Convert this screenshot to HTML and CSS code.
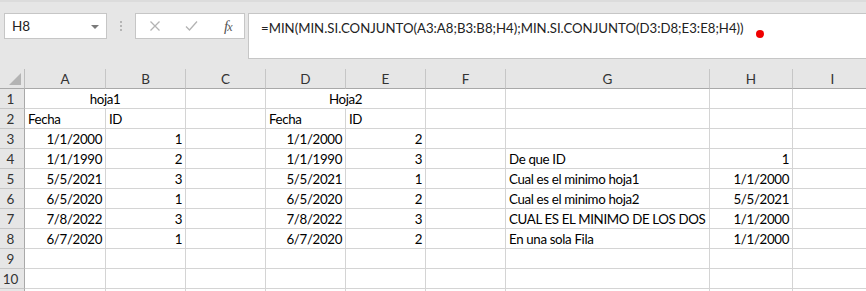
FILE: index.html
```html
<!DOCTYPE html>
<html lang="es">
<head>
<meta charset="utf-8">
<title>Excel</title>
<link rel="stylesheet" href="styles.css">
</head>
<body>
<div class="app">
  <div class="toolbar">
    <div class="namebox">
      <span class="name">H8</span>
      <span class="caret"></span>
    </div>
    <div class="grip"><i></i><i></i><i></i></div>
    <div class="fxbox">
      <svg class="ico" width="12" height="12" viewBox="0 0 12 12"><path d="M1.5 1.5 L10.5 10.5 M10.5 1.5 L1.5 10.5" stroke="#b3b3b3" stroke-width="1.3" fill="none"/></svg>
      <svg class="ico" width="13" height="12" viewBox="0 0 13 12"><path d="M1 6.5 L4.5 10 L12 1.5" stroke="#b3b3b3" stroke-width="1.3" fill="none"/></svg>
      <span class="fx">f<span class="x">x</span></span>
    </div>
    <div class="formula">
      <span class="ftext">=MIN(MIN.SI.CONJUNTO(A3:A8;B3:B8;H4);MIN.SI.CONJUNTO(D3:D8;E3:E8;H4))</span>
      <span class="dot"></span>
    </div>
  </div>
  <div class="sheet">
    <div class="corner"><span class="tri"></span></div>
    <div class="ch">A</div><div class="ch">B</div><div class="ch">C</div><div class="ch">D</div><div class="ch">E</div><div class="ch">F</div><div class="ch">G</div><div class="ch">H</div><div class="ch">I</div>

    <div class="rh">1</div>
    <div class="c span2 ctr">hoja1</div><div class="c"></div><div class="c span2 ctr">Hoja2</div><div class="c"></div><div class="c"></div><div class="c"></div><div class="c"></div>

    <div class="rh">2</div>
    <div class="c">Fecha</div><div class="c">ID</div><div class="c"></div><div class="c">Fecha</div><div class="c">ID</div><div class="c"></div><div class="c"></div><div class="c"></div><div class="c"></div>

    <div class="rh">3</div>
    <div class="c r">1/1/2000</div><div class="c r">1</div><div class="c"></div><div class="c r">1/1/2000</div><div class="c r">2</div><div class="c"></div><div class="c"></div><div class="c"></div><div class="c"></div>

    <div class="rh">4</div>
    <div class="c r">1/1/1990</div><div class="c r">2</div><div class="c"></div><div class="c r">1/1/1990</div><div class="c r">3</div><div class="c"></div><div class="c">De que ID</div><div class="c r">1</div><div class="c"></div>

    <div class="rh">5</div>
    <div class="c r">5/5/2021</div><div class="c r">3</div><div class="c"></div><div class="c r">5/5/2021</div><div class="c r">1</div><div class="c"></div><div class="c">Cual es el minimo hoja1</div><div class="c r">1/1/2000</div><div class="c"></div>

    <div class="rh">6</div>
    <div class="c r">6/5/2020</div><div class="c r">1</div><div class="c"></div><div class="c r">6/5/2020</div><div class="c r">2</div><div class="c"></div><div class="c">Cual es el minimo hoja2</div><div class="c r">5/5/2021</div><div class="c"></div>

    <div class="rh">7</div>
    <div class="c r">7/8/2022</div><div class="c r">3</div><div class="c"></div><div class="c r">7/8/2022</div><div class="c r">3</div><div class="c"></div><div class="c">CUAL ES EL MINIMO DE LOS DOS</div><div class="c r">1/1/2000</div><div class="c"></div>

    <div class="rh">8</div>
    <div class="c r">6/7/2020</div><div class="c r">1</div><div class="c"></div><div class="c r">6/7/2020</div><div class="c r">2</div><div class="c"></div><div class="c">En una sola Fila</div><div class="c r">1/1/2000</div><div class="c"></div>

    <div class="rh">9</div>
    <div class="c"></div><div class="c"></div><div class="c"></div><div class="c"></div><div class="c"></div><div class="c"></div><div class="c"></div><div class="c"></div><div class="c"></div>

    <div class="rh">10</div>
    <div class="c"></div><div class="c"></div><div class="c"></div><div class="c"></div><div class="c"></div><div class="c"></div><div class="c"></div><div class="c"></div><div class="c"></div>

    <div class="rh"></div>
    <div class="c"></div><div class="c"></div><div class="c"></div><div class="c"></div><div class="c"></div><div class="c"></div><div class="c"></div><div class="c"></div><div class="c"></div>
  </div>
</div>
</body>
</html>
```
FILE: styles.css
```css
* { box-sizing: border-box; }
html, body { margin: 0; padding: 0; }
body {
  width: 866px;
  height: 291px;
  overflow: hidden;
  background: #e6e6e6;
  font-family: Lato, "Liberation Sans", sans-serif;
  color: #000;
}
.app { width: 866px; height: 291px; overflow: hidden; }

.toolbar {
  height: 59px;
  display: flex;
  align-items: flex-start;
  padding-top: 11px;
  border-top: 2px solid #dcdcdc;
}

.namebox {
  margin-left: 4px;
  width: 103px;
  height: 26px;
  background: #fff;
  border: 1px solid #c6c6c6;
  display: flex;
  align-items: center;
  justify-content: space-between;
  padding: 0 7px 0 7px;
}
.name { font-size: 13.5px; color: #222; }
.caret {
  width: 0; height: 0;
  border-left: 4px solid transparent;
  border-right: 4px solid transparent;
  border-top: 4px solid #7a7a7a;
  margin-top: 1px;
}
.grip {
  margin-left: 13px;
  margin-top: 8px;
  display: flex;
  flex-direction: column;
  gap: 2px;
}
.grip i { display: block; width: 2px; height: 2px; background: #b5b5b5; }

.fxbox {
  margin-left: 13px;
  width: 110px;
  height: 26px;
  background: #fff;
  border: 1px solid #c6c6c6;
  display: flex;
  align-items: center;
  padding-left: 13px;
}
.ico { display: block; }
.ico + .ico { margin-left: 24px; }
.fx {
  margin-left: 26px;
  font-family: "Liberation Serif", serif;
  font-style: italic;
  font-size: 15px;
  color: #555;
  letter-spacing: -1px;
}
.fx .x { font-size: 12px; }

.formula {
  margin-left: 3px;
  flex: 1;
  height: 46px;
  background: #fff;
  border: 1px solid #c6c6c6;
  border-right: none;
  display: flex;
  align-items: flex-start;
  padding: 6px 0 0 12px;
}
.ftext { font-size: 13.2px; color: #222; white-space: nowrap; }
.dot {
  width: 8px; height: 8px;
  border-radius: 50%;
  background: #f00000;
  margin-left: 12px;
  margin-top: 10px;
}

.sheet {
  margin-top: 10px;
  display: grid;
  grid-template-columns: 25px 81px 80px 80px 80px 80px 80px 204px 83px 80px;
  grid-auto-rows: 20px;
  background: #fff;
}
.corner, .ch, .rh { background: #e6e6e6; }
.corner {
  position: relative;
  border-right: 1px solid #bdbdbd;
  border-bottom: 1px solid #a9a9a9;
}
.tri {
  position: absolute;
  right: 3px;
  bottom: 3px;
  width: 0; height: 0;
  border-left: 12px solid transparent;
  border-bottom: 12px solid #b4b4b4;
}
.ch {
  border-right: 1px solid #c6c6c6;
  border-bottom: 1px solid #a9a9a9;
  text-align: center;
  font-size: 13.5px;
  line-height: 20px;
  color: #333;
}
.rh {
  border-right: 1px solid #a9a9a9;
  border-bottom: 1px solid #c6c6c6;
  text-align: center;
  font-size: 13.5px;
  line-height: 21px;
  color: #333;
  padding-right: 3px;
}
.c {
  border-right: 1px solid #d4d4d4;
  border-bottom: 1px solid #d4d4d4;
  font-size: 13.3px;
  line-height: 21px;
  padding: 0 3px;
  letter-spacing: -0.35px;
  white-space: nowrap;
  overflow: visible;
}
.c.r { text-align: right; }
.c.ctr { text-align: center; }
.span2 { grid-column: span 2; }
```
